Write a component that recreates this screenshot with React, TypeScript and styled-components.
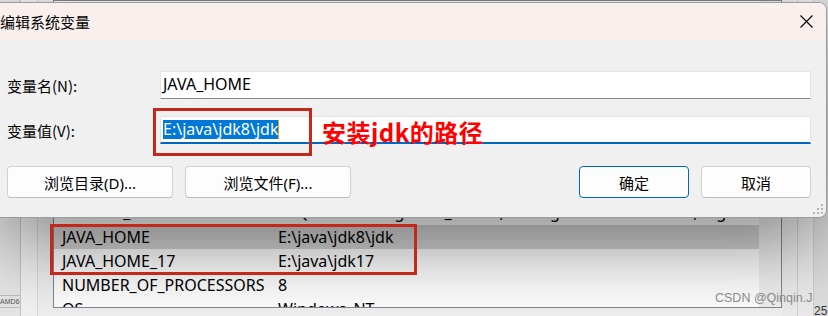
import React from "react";
import styled, { createGlobalStyle } from "styled-components";

const GlobalStyle = createGlobalStyle`
  html, body { margin: 0; padding: 0; }
  body {
    background: #f0f0f0;
    color: #000;
    font-family: "Noto Sans", "Noto Sans CJK SC", sans-serif;
  }
  #root { width: 828px; height: 316px; }
`;

const Page = styled.div`
  position: relative;
  width: 828px;
  height: 316px;
  overflow: hidden;
  background: #f0f0f0;
`;

/* ---------- background window ---------- */
const BackWindow = styled.div`
  display: flex;
  height: 316px;
`;

const SidePane = styled.div`
  width: 20px;
  flex-shrink: 0;
  border-right: 1px solid #c4c4c4;
  background: #e6e6e6;
  display: flex;
  flex-direction: column;
  justify-content: flex-end;
  padding-bottom: 8px;
`;

const AmdTag = styled.div`
  font-family: "Liberation Sans", sans-serif;
  font-size: 7px;
  line-height: 11px;
  color: #555;
  white-space: nowrap;
  overflow: hidden;
  border-top: 1px solid #bdbdbd;
  border-bottom: 1px solid #bdbdbd;
`;

const SideStrip = styled.div`
  width: 16px;
  flex-shrink: 0;
  border-right: 1px solid #d9d9d9;
  background: #f2f2f2;
`;

const Gutter = styled.div`
  width: 15px;
  flex-shrink: 0;
  background: #f0f0f0;
`;

const ListFrame = styled.div`
  width: 729px;
  height: 308px;
  flex-shrink: 0;
  box-sizing: border-box;
  border: 1px solid #82878f;
  background: #fff;
  display: flex;
  overflow: hidden;
`;

const Rows = styled.div`
  flex: 1;
  min-width: 0;
  padding-top: 197px;
  display: flex;
  flex-direction: column;
`;

const Row = styled.div<{ $selected?: boolean; $lead?: boolean }>`
  display: flex;
  align-items: center;
  height: ${(p) => (p.$lead ? "27px" : "24px")};
  flex-shrink: 0;
  font-size: 16px;
  background: ${(p) => (p.$selected ? "#d6d6d6" : "transparent")};
`;

const NameCell = styled.div`
  width: 224px;
  box-sizing: border-box;
  padding-left: 8px;
  white-space: nowrap;
  flex-shrink: 0;
`;

const ValueCell = styled.div`
  flex: 1;
  min-width: 0;
  padding-right: 8px;
  white-space: nowrap;
  overflow: hidden;
  text-overflow: ellipsis;
`;

const ScrollTrack = styled.div`
  width: 22px;
  flex-shrink: 0;
  background: #f0f0f0;
`;

const RightCol = styled.div`
  width: 15px;
  flex-shrink: 0;
  border-right: 1px solid #cfcfcf;
  background: #ececec;
`;

const EdgeCol = styled.div`
  flex: 1;
  background: #dedede;
  display: flex;
  flex-direction: column;
  justify-content: flex-end;
  font-family: "Liberation Sans", sans-serif;
  font-size: 12px;
  line-height: 10px;
  color: #333;
  overflow: hidden;
`;

/* ---------- dialog ---------- */
const Dialog = styled.section`
  position: absolute;
  top: 2px;
  left: -1px;
  width: 828px;
  height: 216px;
  box-sizing: border-box;
  border: 1px solid #9c9c9c;
  border-radius: 0 8px 8px 0;
  background: #f0f0f0;
  box-shadow: 0 28px 82px rgba(0, 0, 0, 0.45);
  display: flex;
  flex-direction: column;
  overflow: hidden;
  z-index: 1;
`;

const TitleBar = styled.header`
  height: 37px;
  flex-shrink: 0;
  background: #f9f0ed;
  display: flex;
  align-items: center;
  justify-content: space-between;
`;

const Title = styled.div`
  font-family: "Noto Sans CJK SC", sans-serif;
  font-size: 15px;
  line-height: 1;
`;

const CloseBox = styled.div`
  width: 40px;
  height: 37px;
  display: flex;
  align-items: center;
  justify-content: center;
`;

const Body = styled.div`
  flex: 1;
  padding: 31px 15px 0 7px;
  display: flex;
  flex-direction: column;
  gap: 17px;
`;

const FieldRow = styled.div`
  display: flex;
  align-items: center;
  height: 28px;
`;

const Label = styled.div`
  width: 153px;
  flex-shrink: 0;
  font-family: "Noto Sans CJK SC", sans-serif;
  font-size: 15px;
`;

const TextBox = styled.div<{ $focused?: boolean }>`
  flex: 1;
  height: 28px;
  box-sizing: border-box;
  background: #fff;
  border: 1px solid #e3e3e3;
  border-bottom: ${(p) => (p.$focused ? "2px solid #0067c0" : "1px solid #868686")};
  border-radius: 2px 2px 0 0;
  display: flex;
  align-items: center;
  padding: 0 2px ${(p) => (p.$focused ? "1px" : "3px")};
  font-size: 16px;
  white-space: nowrap;
`;

const Selected = styled.span`
  display: inline-block;
  line-height: 19px;
  background: #0078d7;
  color: #fff;
  border-right: 1px solid #f09a2a;
`;

const ButtonRow = styled.div`
  display: flex;
  gap: 12px;
  height: 32px;
  margin-top: 5px;
`;

const Button = styled.button<{ $w: number; $primary?: boolean }>`
  width: ${(p) => p.$w}px;
  height: 32px;
  box-sizing: border-box;
  padding: 0;
  background: #fdfdfd;
  border: 1px solid ${(p) => (p.$primary ? "#0067c0" : "#d1d1d1")};
  border-bottom-color: ${(p) => (p.$primary ? "#0067c0" : "#bcbcbc")};
  border-radius: 4px;
  font-family: "Noto Sans", "Noto Sans CJK SC", sans-serif;
  font-size: 15px;
  color: #000;
`;

const Spacer = styled.div`
  flex: 1;
`;

const Grip = styled.svg`
  position: absolute;
  right: 2px;
  bottom: 2px;
`;

/* ---------- annotations ---------- */
const RedFrame = styled.div`
  position: absolute;
  box-sizing: border-box;
  border: 3px solid #c4281a;
  z-index: 2;
`;

const ValueMark = styled(RedFrame)`
  left: 153px;
  top: 108px;
  width: 159px;
  height: 48px;
`;

const RowsMark = styled(RedFrame)`
  left: 50px;
  top: 224px;
  width: 367px;
  height: 51px;
`;

const RedNote = styled.div`
  position: absolute;
  left: 322px;
  top: 120px;
  z-index: 2;
  font-family: "Noto Sans CJK SC", sans-serif;
  font-weight: 700;
  font-size: 24px;
  letter-spacing: 0.5px;
  line-height: 24px;
  color: #ff0000;
  white-space: nowrap;
`;

const Watermark = styled.div`
  position: absolute;
  left: 715px;
  top: 291px;
  z-index: 2;
  font-family: "Liberation Sans", sans-serif;
  font-size: 12.5px;
  line-height: 14px;
  color: #8a8a8a;
  white-space: nowrap;
`;

const rows = [
  {
    name: "FFMPEG_HOME",
    value:
      "F:\\Qt\\Tools\\mingw810_64\\bin;C:\\Program Files\\Git\\cmd;F:\\gcc\\bin;D:\\CMake\\bin;C:\\Windows\\system32",
    lead: true,
  },
  { name: "JAVA_HOME", value: "E:\\java\\jdk8\\jdk", selected: true },
  { name: "JAVA_HOME_17", value: "E:\\java\\jdk17" },
  { name: "NUMBER_OF_PROCESSORS", value: "8" },
  { name: "OS", value: "Windows_NT" },
];

export default function App() {
  return (
    <>
      <GlobalStyle />
      <Page>
        <BackWindow>
          <SidePane>
            <AmdTag>AMD64</AmdTag>
          </SidePane>
          <SideStrip />
          <Gutter />
          <ListFrame>
            <Rows>
              {rows.map((r) => (
                <Row key={r.name} $selected={r.selected} $lead={r.lead}>
                  <NameCell>{r.name}</NameCell>
                  <ValueCell>{r.value}</ValueCell>
                </Row>
              ))}
            </Rows>
            <ScrollTrack />
          </ListFrame>
          <RightCol />
          <RightCol />
          <EdgeCol>25</EdgeCol>
        </BackWindow>

        <Dialog>
          <TitleBar>
            <Title>编辑系统变量</Title>
            <CloseBox>
              <svg width="13" height="13" viewBox="0 0 13 13">
                <path d="M0.5 0.5 L12.5 12.5 M12.5 0.5 L0.5 12.5" stroke="#000" strokeWidth="1.1" fill="none" />
              </svg>
            </CloseBox>
          </TitleBar>
          <Body>
            <FieldRow>
              <Label>变量名(N):</Label>
              <TextBox>JAVA_HOME</TextBox>
            </FieldRow>
            <FieldRow>
              <Label>变量值(V):</Label>
              <TextBox $focused>
                <Selected>E:\java\jdk8\jdk</Selected>
              </TextBox>
            </FieldRow>
            <ButtonRow>
              <Button $w={166}>浏览目录(D)...</Button>
              <Button $w={166}>浏览文件(F)...</Button>
              <Spacer />
              <Button $w={110} $primary>确定</Button>
              <Button $w={110}>取消</Button>
            </ButtonRow>
          </Body>
          <Grip width="11" height="11" viewBox="0 0 11 11">
            <g fill="#b4b4b4">
              <rect x="8" y="0" width="2" height="2" />
              <rect x="4" y="4" width="2" height="2" />
              <rect x="8" y="4" width="2" height="2" />
              <rect x="0" y="8" width="2" height="2" />
              <rect x="4" y="8" width="2" height="2" />
              <rect x="8" y="8" width="2" height="2" />
            </g>
          </Grip>
        </Dialog>

        <ValueMark />
        <RowsMark />
        <RedNote>安装jdk的路径</RedNote>
        <Watermark>CSDN @Qinqin.J</Watermark>
      </Page>
    </>
  );
}
